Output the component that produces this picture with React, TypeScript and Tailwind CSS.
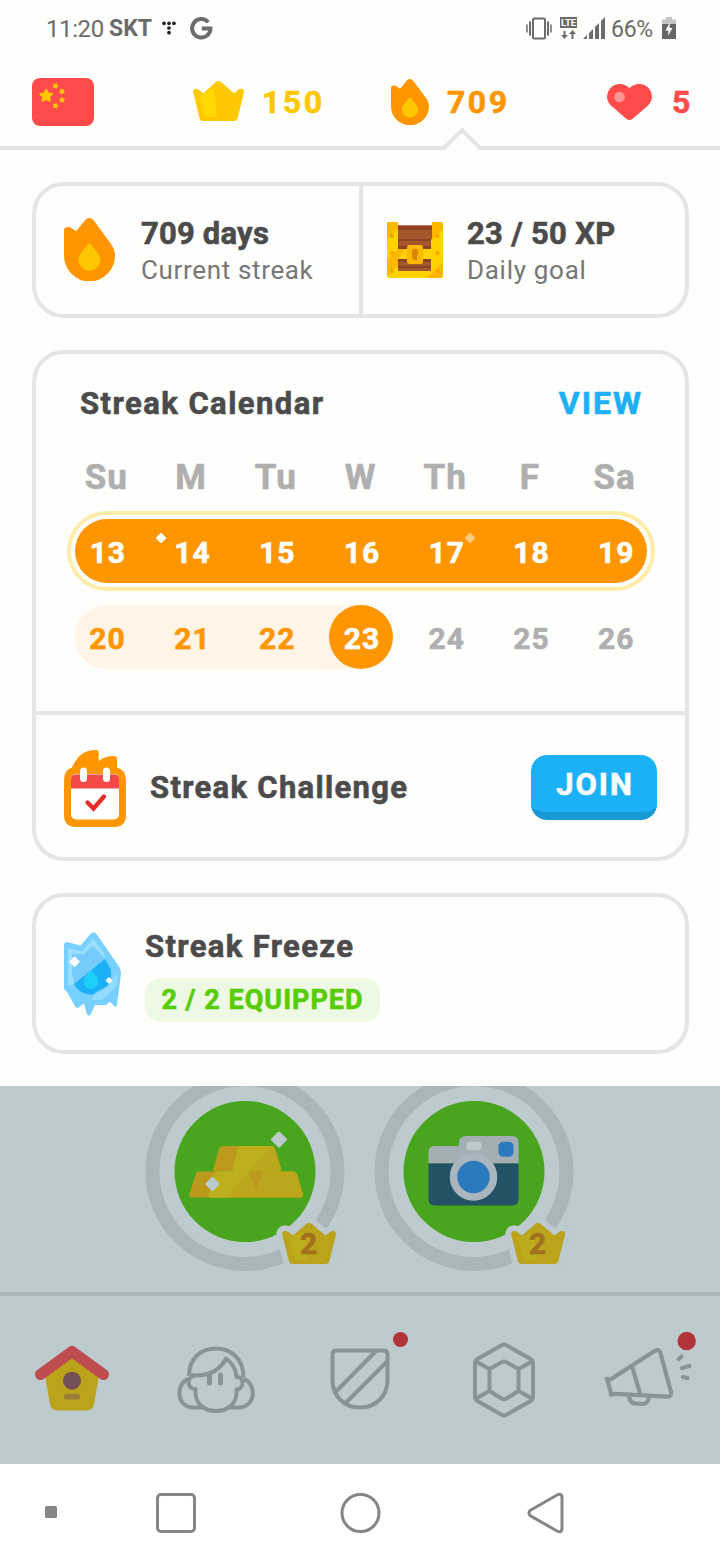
import type { ReactNode } from "react";
import clsx from "clsx";

const WEEKDAYS = ["Su", "M", "Tu", "W", "Th", "F", "Sa"];
const LAST_WEEK = [13, 14, 15, 16, 17, 18, 19];
const THIS_WEEK = [20, 21, 22, 23, 24, 25, 26];
const TODAY = 23;

// Thickens the bold weight a little
const heavy = "font-bold [-webkit-text-stroke:0.6px_currentColor]";

const CROWN_PATH =
  "M.3 11.5C-.6 8 3.2 6.6 5.8 8.8L10.5 12.3 22.6 1.3Q25.5-1.2 28.4 1.3L41 12.3 45.4 8.8C48 6.6 51.8 8 50.9 11.5L44.8 36.8Q44 40 41 40H10Q7.2 40 6.4 36.8Z";

function Flame({ className }: { className?: string }) {
  return (
    <svg viewBox="0 0 38 46" preserveAspectRatio="none" className={clsx("shrink-0", className)}>
      <path
        d="M0 9C0 6.4 3.7 6 5.6 7.3L9 9.7 15.8 1.4Q18.8-1.4 21.9 1.4L34 17.5C36.8 21.3 38 24 38 27.5A19 18.8 0 0 1 0 27.5Z"
        fill="#ff9600"
      />
      <path
        d="M17.8 19.3Q19 18 20.2 19.3L24.8 25.2A8 8 0 0 1 27 30.5 8.1 8 0 0 1 10.8 30.5 8 8 0 0 1 13 25.2Z"
        fill="#ffc800"
      />
    </svg>
  );
}

function Flag() {
  const star = "M0-1 .3-.4 .97-.3 .48.17 .6.83 0 .52-.6.83-.48.17-.97-.3-.3-.4Z";
  return (
    <svg width="62" height="48" viewBox="0 0 62 48" className="shrink-0">
      <rect width="62" height="48" rx="8" fill="#ff4b4b" />
      <g fill="#ffc800" stroke="#ffc800" strokeLinejoin="round" strokeWidth=".3">
        <path d={star} transform="translate(14.2 17.8) scale(6.2)" />
        <path d={star} transform="translate(23.5 7.8) rotate(20) scale(2.8)" />
        <path d={star} transform="translate(30 13.5) rotate(40) scale(2.8)" />
        <path d={star} transform="translate(30 22) scale(2.8)" />
        <path d={star} transform="translate(23.5 27.8) rotate(20) scale(2.8)" />
      </g>
    </svg>
  );
}

function Chest() {
  return (
    <svg width="56" height="56" viewBox="0 0 56 56" className="shrink-0">
      <path d="M10 3H46V51H10Z" fill="#a5562b" />
      <path d="M10 4H46V8H10ZM10 17h36v2H10ZM10 24h36v4H10Z" fill="#8a4424" />
      <path d="M10 3h36v1H10Z" fill="#cd7d51" />
      <path d="M2 0H11V27H44V18L56 0V54Q56 56 54 56H2Q0 56 0 54V2Q0 0 2 0ZM11 37V49H44V37Z" fill="#ffd200" fillRule="evenodd" />
      <path d="M11 37H44V40H11ZM11 44h33v2H11Z" fill="#8a4424" />
      <path d="M2 0H11V7L0 18V2Q0 0 2 0ZM45 0H54Q56 0 56 2V7L45 18ZM11 27H18L11 37V44L0 54V38ZM56 40V54Q56 56 54 56H40L45 51Z" fill="#ffb800" />
      <rect x="20" y="23" width="16" height="19" rx="2.5" fill="#ffb800" />
      <path d="M25 28Q28 25 31 28V32L30 34V38H26L25 34V31Z" fill="#d88700" />
      <g fill="#ffa200">
        <circle cx="5" cy="14" r="2" />
        <circle cx="50.5" cy="14" r="2" />
        <circle cx="5" cy="31" r="2" />
        <circle cx="50.5" cy="31" r="2" />
        <circle cx="5" cy="49.5" r="2" />
        <circle cx="50.5" cy="49.5" r="2" />
      </g>
    </svg>
  );
}

function ChallengeIcon() {
  return (
    <svg width="62" height="77" viewBox="0 0 62 77" className="shrink-0">
      <path
        d="M0 30Q0 20 8 17.5C12 8 19 0 32 0Q34.7 0 34.7 3V11Q41 6 50 6 53 6 53 9V17.5Q62 20 62 30V65Q62 77 50 77H12Q0 77 0 65Z"
        fill="#ff9600"
      />
      <rect x="7" y="24" width="48" height="45.5" rx="5" fill="#fff" />
      <path d="M7 38.5V29Q7 24.5 12 24.5H50Q55 24.5 55 29V38.5Z" fill="#f54848" />
      <rect x="16" y="17.5" width="7" height="14.5" rx="3.5" fill="#fff" />
      <rect x="39" y="17.5" width="7" height="14.5" rx="3.5" fill="#fff" />
      <path d="M23.5 52.5 29.5 58.5 40 46.5" fill="none" stroke="#ea2b2b" strokeWidth="4.3" strokeLinecap="round" />
    </svg>
  );
}

function FrozenFlame() {
  return (
    <svg width="57" height="84" viewBox="0 0 57 84" className="shrink-0">
      <path
        d="M0 12.5Q1 9 5 10.5L16.5 13.5 26.5 2Q29.5-1.5 32.5 2L55 34.5Q57 38 57 41L53 73Q52 76 50 74L46 69.5 42 73H31L27 82Q24.5 86 22.5 81L20 71.5 14.5 75.5Q12.5 77 11 74L3 60 0 57Z"
        fill="#77d0ff"
      />
      <path d="M4 16 18 19.5 29 7 40 21 41 27 24 41 10 52 4 54Z" fill="#9bdfff" />
      <path d="M8 22 20 22 29 13.5 41 27 10 52 8 40Z" fill="#77cbfa" />
      <path d="M41 27 46.5 37C50 53 38 62.5 27 62.5 18 62 13 57.5 10 52Z" fill="#1cb0f6" />
      <path d="M27 38 33.5 45.5C37 53 31 57 27.5 57 21 57 18 50 21 45Z" fill="#1cd0f8" />
      <path d="M53.5 39V53L38 68H27L31 61 45 53Z" fill="#9bdfff" fillOpacity=".8" />
      <path d="M10.5 24.8 15.5 29.8 10.5 34.8 5.5 29.8ZM45 45.500 48 48.500 45 51.500 42 48.500Z" fill="#fff" stroke="#fff" strokeLinejoin="round" />
    </svg>
  );
}

function StatusBar() {
  return (
    <div className="flex h-14 items-center pl-[46px] pr-[44px] text-[24px] text-[#6b6b6b]">
      <span className="w-[63px] pt-0.5 tracking-[-0.4px]">11:20</span>
      <span className="w-[53px] pt-0.5 text-[23px] font-bold">SKT</span>
      <svg width="14" height="14" viewBox="0 0 15 15" fill="#222">
        <circle cx="2.2" cy="2.5" r="2" />
        <circle cx="7.5" cy="2.5" r="2" />
        <circle cx="12.8" cy="2.5" r="2" />
        <circle cx="7.5" cy="7.5" r="2" />
        <circle cx="7.5" cy="12.5" r="2" />
      </svg>
      <svg width="23" height="23" viewBox="0 0 23 23" className="ml-[14px]" fill="none" stroke="currentColor" strokeWidth="4">
        <path d="M18.2 5.2A9.2 9.2 0 1 0 20.5 11.5H11.8" />
      </svg>
      <svg width="26" height="23" viewBox="0 0 26 23" className="ml-auto" fill="none" stroke="currentColor">
        <rect x="7" y="1.5" width="12" height="20" rx="1.5" strokeWidth="2" />
        <path d="M4 4.5V18.5M22 4.5V18.5" strokeWidth="2" />
        <path d="M1 7.5V15.5M25 7.5V15.5" strokeWidth="1.5" />
      </svg>
      <svg width="17" height="22" viewBox="0 0 17 22" className="ml-[8px]" fill="currentColor">
        <rect width="17" height="11" />
        <text x="1" y="9" fontSize="9.5" fontWeight="700" fill="#fff" textLength="15">
          LTE
        </text>
        <path d="M3.5 14h2v4H8l-3.5 4L1 18h2.500ZM11.500 22h2V17H16l-3.500-4L9 17h2.500Z" />
      </svg>
      <svg width="22" height="22" viewBox="0 0 22 22" className="ml-[6px]" fill="currentColor">
        <path d="M0 22 4 18V22ZM6 22V16L10 12V22ZM12 22V10L16 6V22ZM18 22V4L22 0V22Z" />
      </svg>
      <span className="ml-[6px] w-[51px] pt-1 text-[23px] tracking-[-0.3px]">66%</span>
      <svg width="14" height="22" viewBox="0 0 14 22">
        <path d="M4 0H10V2.500H14V7H0V2.500H4Z" fill="#c4c4c4" />
        <path d="M0 7H14V22H0Z" fill="#666" />
        <path d="M8 5 3.500 13.500H6.500L6 19 10.500 11H7.500Z" fill="#fff" />
      </svg>
    </div>
  );
}

function StatsBar() {
  return (
    <header className={clsx("relative h-[94px] border-b-4 border-[#e5e5e5] text-[32px] tracking-[2.5px]", heavy)}>
      <div className="flex h-[92px] items-center pl-8">
        <Flag />
        <svg width="51" height="40" viewBox="0 0 51 40" className="-mt-0.5 ml-[99px] shrink-0">
          <path d={CROWN_PATH} fill="#ffc800" />
          <path d="M7 17Q6.500 15 8.500 14L18 8.500Q21 7.500 21.500 11L24 33Q24.200 36 21.500 36H14Q12 36 11 33Z" fill="#ffd900" />
        </svg>
        <span className="ml-[18px] w-[129px] text-[#ffc800]">150</span>
        <Flame className="h-[46px] w-[38px]" />
        <span className="ml-[18px] w-[160px] text-[#ff9600]">709</span>
        <svg width="45" height="36" viewBox="0 0 45 36" className="shrink-0">
          <path
            d="M22.500 4C17-1.500 8-1.300 3.500 4-1.300 9.500-1 17 4 21.500L19 34.500Q22.500 37.500 26 34.500L41 21.500C46 17 46.300 9.500 41.500 4 37-1.300 28-1.500 22.500 4Z"
            fill="#ff4b4b"
          />
          <circle cx="12.500" cy="13" r="5.300" fill="#ff9494" />
        </svg>
        <span className="ml-[20px] text-[#ff4b4b]">5</span>
      </div>
      {/* Pointer under the active stat */}
      <svg width="40" height="24" viewBox="0 0 40 24" className="absolute left-[442px] top-[70px]">
        <path d="M1.500 24V21L20 3 38.500 21V24Z" fill="#fefefd" />
        <path d="M0 22H1.800L20 4.200 38.200 22H40" fill="none" stroke="#e5e5e5" strokeWidth="4" />
      </svg>
    </header>
  );
}

function Stat({ icon, value, label }: { icon: ReactNode; value: ReactNode; label: ReactNode }) {
  return (
    <div className="flex items-center">
      {icon}
      <div className="pt-0.5">
        <p className={clsx("text-[31px] leading-[38px] text-[#4b4b4b]", heavy)}>{value}</p>
        <p className="text-[26px] leading-[34px] text-[#777]">{label}</p>
      </div>
    </div>
  );
}

function StreakCalendar() {
  return (
    <section className="h-[511px] rounded-[32px] border-4 border-[#e5e5e5]">
      <div className="flex h-[361px] flex-col px-7 border-b-4 border-[#e5e5e5]">
        <div className="flex h-[98px] items-center justify-between pl-4 pr-[14px]">
          <h2 className={clsx("pt-0.5 text-[31px] tracking-[1.45px] text-[#4b4b4b]", heavy)}>Streak Calendar</h2>
          <button className={clsx("text-[32px] tracking-[2px] text-[#1cb0f6]", heavy)}>VIEW</button>
        </div>
        <div className={clsx("grid h-[51px] grid-cols-7 items-center text-center text-[35px] tracking-[1px] text-[#afafaf]", heavy)}>
          {WEEKDAYS.map((day) => (
            <span key={day}>{day}</span>
          ))}
        </div>
        <div className="-mx-px mt-2 w-[596px] px-1">
          <div className="flex h-20 items-center rounded-full border-4 border-[#ffeca8] p-1">
            <div className="relative h-16 w-full rounded-full bg-[#ff9600]">
              <div className={clsx("-ml-2.5 -mr-[11px] grid h-16 grid-cols-7 items-center pt-[3px] text-center text-[30px] tracking-[1px] text-white", heavy)}>
                {LAST_WEEK.map((day) => (
                  <span key={day} className="pl-px">{day}</span>
                ))}
              </div>
              <svg width="12" height="12" viewBox="0 0 12 12" className="absolute left-20 top-[13px]">
                <path d="M6 1 11 6 6 11 1 6Z" fill="#fff" stroke="#fff" strokeLinejoin="round" />
              </svg>
              <svg width="12" height="12" viewBox="0 0 12 12" className="absolute left-[389px] top-[13px]">
                <path d="M6 1 11 6 6 11 1 6Z" fill="#ffca80" stroke="#ffca80" strokeLinejoin="round" />
              </svg>
            </div>
          </div>
        </div>
        <div className={clsx("-mr-px ml-px mt-[14px] grid h-16 grid-cols-7 items-center text-center text-[30px] tracking-[1px]", heavy)}>
          {THIS_WEEK.map((day, i) => (
            <span
              key={day}
              className={clsx(
                "flex h-16 items-center",
                day <= TODAY ? "text-[#ff9600]" : "text-[#afafaf]",
                day < TODAY && "bg-[#fff4e5]",
                i === 0 && "ml-[10px] rounded-l-full",
                day === TODAY && "bg-linear-to-r from-[#fff4e5] from-50% to-transparent to-50%",
              )}
            >
              <span
                className={clsx(
                  "flex h-16 w-16 items-center justify-center pl-px pt-[3px]",
                  i > 0 && "mx-auto",
                  day === TODAY && "rounded-full bg-[#ff9600] text-white",
                )}
              >
                {day}
              </span>
            </span>
          ))}
        </div>
      </div>
      <div className="flex h-[142px] items-center px-7">
        <div className="mb-[-2px] mt-[2px]">
          <ChallengeIcon />
        </div>
        <h2 className={clsx("ml-6 pt-[5px] text-[31px] tracking-[1.3px] text-[#4b4b4b]", heavy)}>Streak Challenge</h2>
        <button className={clsx("ml-auto mt-[3px] h-[65px] w-[126px] rounded-[16px] border-b-8 border-[#1899d6] bg-[#1cb0f6] pl-0.5 pt-[3px] text-[31px] tracking-[2px] text-white", heavy)}>
          JOIN
        </button>
      </div>
    </section>
  );
}

function SkillNode({ children }: { children: ReactNode }) {
  return (
    <svg width="200" height="200" viewBox="0 0 200 200" className="-mt-[14px] shrink-0">
      <circle cx="100" cy="99.500" r="92.500" fill="none" stroke="#aab6bb" strokeWidth="14" />
      <circle cx="100" cy="99.500" r="70.500" fill="#48a51d" />
      {children}
      <g transform="translate(137 151) scale(1.060 1.025)">
        <path d={CROWN_PATH} fill="#bdcace" stroke="#bdcace" strokeWidth="11" strokeLinejoin="round" />
        <path d={CROWN_PATH} fill="#bca31c" />
        <path d="M7 17Q6.500 15 8.500 14L18 10.500Q21 9.500 21.500 12L24 33Q24.200 36 21.500 36H14Q12 36 11 33Z" fill="#bdad1c" />
      </g>
      <text x="163.500" y="181.500" textAnchor="middle" fontSize="30" fontWeight="700" fill="#a0701c" stroke="#a0701c" strokeWidth=".6">
        2
      </text>
    </svg>
  );
}

function SkillTree() {
  return (
    <div className="flex h-[206px] justify-center gap-[29px] overflow-hidden pr-px">
      <SkillNode>
        <path d="M74 77Q75 74 78 74H126Q129 74 130 77L136 96Q136.500 99.500 133 99.500H71Q67.500 99.500 68.500 96Z" fill="#bc991c" />
        <path d="M50.500 102.500Q51.500 99.500 54.500 99.500H148Q151 99.500 152 102.500L158 122Q158.500 125.500 155 125.500H47.500Q43.500 125.500 44.500 122Z" fill="#bc991c" />
        <path d="M92.500 77Q93.500 74 97 74H126Q129 74 130 77L136 96Q136.500 99.500 133 99.500H90Q87 99.500 88 96Z" fill="#bca71c" />
        <path d="M92.500 77Q93.500 74 97 74H126L103 99.500H90Q87 99.500 88 96Z" fill="#bdaf1d" />
        <path d="M69 102.500Q70 99.500 73 99.500H104L112 122Q112 125.500 109 125.500H66.500Q63 125.500 64 122Z" fill="#bca71c" />
        <path d="M69 102.500Q70 99.500 73 99.500H104L81 125.500H66.500Q63 125.500 64 122Z" fill="#bdaf1d" />
        <path d="M118 99.500H148Q151 99.500 152 102.500L158 122Q158.500 125.500 155 125.500H110V120Z" fill="#bca71c" />
        <path d="M134 61 140.500 67.500 134 74 127.500 67.500ZM67.500 106.500 73 112 67.500 117.500 62 112Z" fill="#bdcace" stroke="#bdcace" strokeWidth="3" strokeLinejoin="round" />
      </SkillNode>
      <SkillNode>
        <path d="M54.500 91.500V80Q54.500 74 60.500 74H85V71Q85 64 92 64H138Q144.500 64 144.500 71V91.500Z" fill="#a3afb5" />
        <path d="M54.500 91.500H144.500V127Q144.500 133.500 138 133.500H61Q54.500 133.500 54.500 127Z" fill="#235266" />
        <rect x="92.200" y="69.700" width="15.500" height="8.500" rx="4" fill="#bdcace" />
        <rect x="124.500" y="69.700" width="15" height="15" rx="4.500" fill="#2b7abd" />
        <circle cx="99.500" cy="105" r="20" fill="#2b7abd" stroke="#aab6bd" strokeWidth="7.500" />
      </SkillNode>
    </div>
  );
}

// Each tab icon is drawn in its own 144px wide slice of the bar
function TabBar() {
  return (
    <nav className="flex h-[172px] border-t-4 border-[#aab6bb] pt-6">
      <svg width="144" height="110" viewBox="0 0 144 110">
        <path d="M45 56 72 35 99 56 94 84Q93 90.500 86 90.500H58Q51 90.500 50 84Z" fill="#bca31c" />
        <path d="M40.500 54.500 72 31.500 103.500 54.500" fill="none" stroke="#be4c50" strokeWidth="11" strokeLinecap="round" strokeLinejoin="round" />
        <circle cx="72" cy="60.700" r="9" fill="#745056" />
        <rect x="64" y="74" width="16" height="5.500" rx="2.500" fill="#9a7d38" />
      </svg>
      <svg width="144" height="110" viewBox="144 0 144 110" fill="none" stroke="#87949a" strokeWidth="4" strokeLinejoin="round">
        <path d="M189 56C189 38 201 28.500 216 28.500S243.500 39 243.500 57" />
        <path d="M190 55C207 57 219 52 226 38.500 231.500 42.500 236 49 236.500 57 244.500 56 244.500 69 236.500 69.500V73C236 84 228 91 216 91S196 84 195.500 73V69C186.500 69 186.500 57 194 56" />
        <path d="M188.500 59C176 63 175.500 86 192 87.500H204M243.500 59C256.500 63 256.500 86 240 87.500H228" />
        <path d="M209.500 55V63M220.500 55V63" strokeWidth="5" strokeLinecap="round" />
      </svg>
      <svg width="144" height="110" viewBox="288 0 144 110" fill="none" stroke="#87949a" strokeWidth="4">
        <path d="M336 30.500H383.500Q387.500 30.500 387.500 34.500V60C387.500 76 376 87.500 360 87.500S332.500 76 332.500 60V34.500Q332.500 30.500 336 30.500ZM336 71.500 376 31M346 82.500 387 41.500" />
        <circle cx="400.500" cy="19.500" r="7.500" fill="#b03438" stroke="none" />
      </svg>
      <svg width="144" height="110" viewBox="432 0 144 110" fill="none" stroke="#87949a" strokeWidth="4" strokeLinejoin="round">
        <path d="M501.500 25.300Q504 23.800 506.500 25.300L530.500 39Q533 40.500 533 43.500V76.500Q533 79.500 530.500 81L506.500 94.700Q504 96.200 501.500 94.700L477.500 81Q475 79.500 475 76.500V43.500Q475 40.500 477.500 39Z" />
        <path d="M501.500 42.300Q504 40.800 506.500 42.300L518.500 49V71L506.500 78.500Q504 80 501.500 78.500L489.500 71V49ZM476 41.500 489.500 49M532 41.500 518.500 49M476 78.500 489.500 71M532 78.500 518.500 71" />
      </svg>
      <svg width="144" height="110" viewBox="576 0 144 110" fill="none" stroke="#87949a" strokeWidth="4.200" strokeLinejoin="round">
        <path d="M608 61 654.500 31Q659 28.500 660.500 33L671 72Q671.500 77 667 76.700L611 73.700M607 59 611.500 74.500M632 46 640 73.500" strokeLinecap="square" />
        <path d="M629 76.500C630 82 633 83.500 636 83.500L643 84C647 83.500 649 80 648.500 77.500" />
        <path d="M678.500 39 681.500 36.500M682 48 689.500 46M683 57 687.500 58" strokeLinecap="round" />
        <circle cx="686.700" cy="21" r="9.200" fill="#b03438" stroke="none" />
      </svg>
    </nav>
  );
}

export default function App() {
  return (
    <div className="w-[720px] h-[1560px] overflow-hidden bg-[#fefefd] font-['Roboto',sans-serif]">
      <StatusBar />
      <StatsBar />
      <main className="flex flex-col gap-8 pl-8 pr-[31px] py-8">
        <section className="flex h-[136px] rounded-[32px] border-4 border-[#e5e5e5]">
          <div className="flex w-[327px] items-center border-r-4 border-[#e5e5e5] pl-7">
            <Stat
              icon={<Flame className="-mt-0.5 mr-[26px] h-[63px] w-[51px]" />}
              value={<span className="tracking-[0.2px]">709 days</span>}
              label={<span className="tracking-[0.65px]">Current streak</span>}
            />
          </div>
          <div className="flex items-center pl-6">
            <Stat
              icon={<div className="mr-6"><Chest /></div>}
              value={<span className="tracking-[0.3px]">23 / 50 XP</span>}
              label={<span className="tracking-[0.7px]">Daily goal</span>}
            />
          </div>
        </section>

        <StreakCalendar />

        <section className="flex h-[161px] items-center rounded-[32px] border-4 border-[#e5e5e5] pl-7">
          <FrozenFlame />
          <div className="ml-6">
            <h2 className={clsx("pt-0.5 text-[31px] leading-[38px] tracking-[1.35px] text-[#4b4b4b]", heavy)}>Streak Freeze</h2>
            <p className={clsx("mt-3 flex h-11 w-[235px] items-center justify-center rounded-[16px] bg-[#eef9e4] pt-0.5 text-[27px] tracking-[1px] text-[#58cc02]", heavy)}>
              2 / 2 EQUIPPED
            </p>
          </div>
        </section>
      </main>

      <div className="bg-[#bdcace]">
        <SkillTree />
        <TabBar />
      </div>

      {/* Android navigation */}
      <svg width="720" height="96" viewBox="0 0 720 96" className="block bg-white" fill="none" stroke="#858585" strokeWidth="3">
        <rect x="45" y="42" width="12" height="12" rx="1.500" fill="#858585" stroke="none" />
        <rect x="157.500" y="30.500" width="37" height="37" rx="3.500" />
        <circle cx="360.500" cy="49" r="18.500" />
        <path d="M530 46.500 557 31Q561.500 29 562 33V65Q561.500 69 557 67L530 51.500Q528 49 530 46.500Z" />
      </svg>
    </div>
  );
}
